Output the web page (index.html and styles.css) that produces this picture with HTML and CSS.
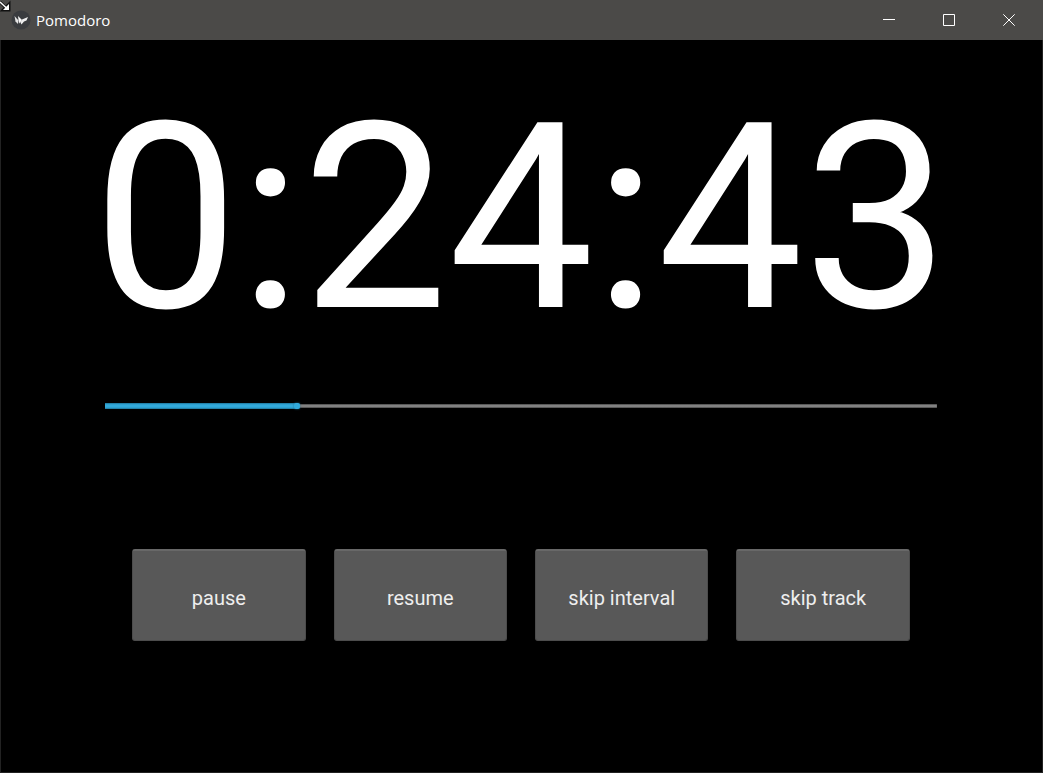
FILE: index.html
```html
<!DOCTYPE html>
<html lang="en">
<head>
<meta charset="utf-8">
<title>Pomodoro</title>
<link rel="stylesheet" href="styles.css">
</head>
<body>
<div class="window">
  <header class="titlebar">
    <svg class="cursor" viewBox="0 0 12 12" width="12" height="12" aria-hidden="true"><path d="M0 2L6 8M9 4V10H3Z" fill="none" stroke="#111" stroke-width="3"/><path d="M0 2L7 8.500" stroke="#fff" stroke-width="1.500"/><path d="M9 4V10H3Z" fill="#fff"/></svg>
    <svg class="logo" viewBox="0 0 20 20" width="20" height="20" aria-hidden="true"><circle cx="10" cy="10" r="9.500" fill="#3a3c3f"/><path d="M3.500 6L7.500 10.500L7 14L4.500 11.500Z" fill="#e4e4e4"/><path d="M7 6L11 10L8.500 13.500L7.500 10Z" fill="#fafafa"/><path d="M11 9.500L17 7L15.500 10.500L13 11.500L10.500 14.500L9.500 12.500Z" fill="#eee"/></svg>
    <h1 class="title">Pomodoro</h1>
    <div class="controls">
      <button class="control" type="button" aria-label="Minimize"><svg viewBox="0 0 12 12" width="12" height="12"><path d="M0 5.500H12"/></svg></button>
      <button class="control" type="button" aria-label="Maximize"><svg viewBox="0 0 12 12" width="12" height="12"><path d="M.5.5H11.500V11.500H.5Z"/></svg></button>
      <button class="control" type="button" aria-label="Close"><svg viewBox="0 0 12 12" width="12" height="12"><path d="M.3.3L11.700 11.700M11.700.3L.3 11.700"/></svg></button>
    </div>
  </header>
  <main class="timer">
    <time class="clock">0:24:43</time>
    <input class="progress" type="range" min="0" max="1000" value="229" aria-label="Track position">
    <div class="actions">
      <button class="action" type="button">pause</button>
      <button class="action" type="button">resume</button>
      <button class="action" type="button">skip interval</button>
      <button class="action" type="button">skip track</button>
    </div>
  </main>
</div>
</body>
</html>
```

FILE: styles.css
```css
* {
  box-sizing: border-box;
}

body {
  margin: 0;
  background: #000;
  color: #fff;
  font-family: Roboto, sans-serif;
}

.window {
  display: flex;
  flex-direction: column;
  min-height: 100vh;
  border: 1px solid #222;
  border-top: 0;
}

.titlebar {
  position: relative;
  display: flex;
  align-items: center;
  height: 40px;
  margin: 0 -1px;
  padding-left: 11px;
  background: #4b4a48;
}

.cursor {
  position: absolute;
  top: 0;
  left: 0;
}

.logo {
  margin-right: 5px;
}

.title {
  margin: 0;
  font: 400 15px/20px "Open Sans", sans-serif;
}

.controls {
  display: flex;
  align-self: stretch;
  margin-left: auto;
  padding-right: 4px;
}

.control {
  display: grid;
  place-items: center;
  width: 60px;
  padding: 0;
  border: 0;
  background: none;
}

.control path {
  fill: none;
  stroke: #fff;
}

.timer {
  flex: 1;
  display: flex;
  flex-direction: column;
  align-items: center;
  padding: 0 calc(10% + 1px) 0 10%;
}

.clock {
  margin-top: 26px;
  font-size: 260px;
  line-height: 304px;
  white-space: nowrap;
}

.progress {
  appearance: none;
  width: 100%;
  height: 20px;
  margin: 26px 0 0;
  background: none;
}

.progress::-webkit-slider-runnable-track {
  height: 6px;
  background:
    linear-gradient(#1c7397, #32a9da 30%, #32a9da 70%, #1c7397) left / 23% 6px no-repeat,
    linear-gradient(#444, #858585 40%, #858585 60%, #444) center / 100% 4px no-repeat;
}

.progress::-webkit-slider-thumb {
  appearance: none;
  width: 6px;
  height: 6px;
  border-radius: 2px;
  background: #32a9da;
  box-shadow: 0 0 2px #1c7397;
}

.actions {
  display: flex;
  gap: 28px;
  width: 100%;
  margin-top: 133px;
  padding: 0 27px;
}

.action {
  flex: 1 1 0;
  height: 92px;
  padding: 4px 0 0;
  border: 1px solid #4c4c4c;
  border-top: 2px solid #686868;
  border-radius: 3px;
  background: #585858;
  color: #eee;
  font: 400 20px/24px Roboto, sans-serif;
}
```
